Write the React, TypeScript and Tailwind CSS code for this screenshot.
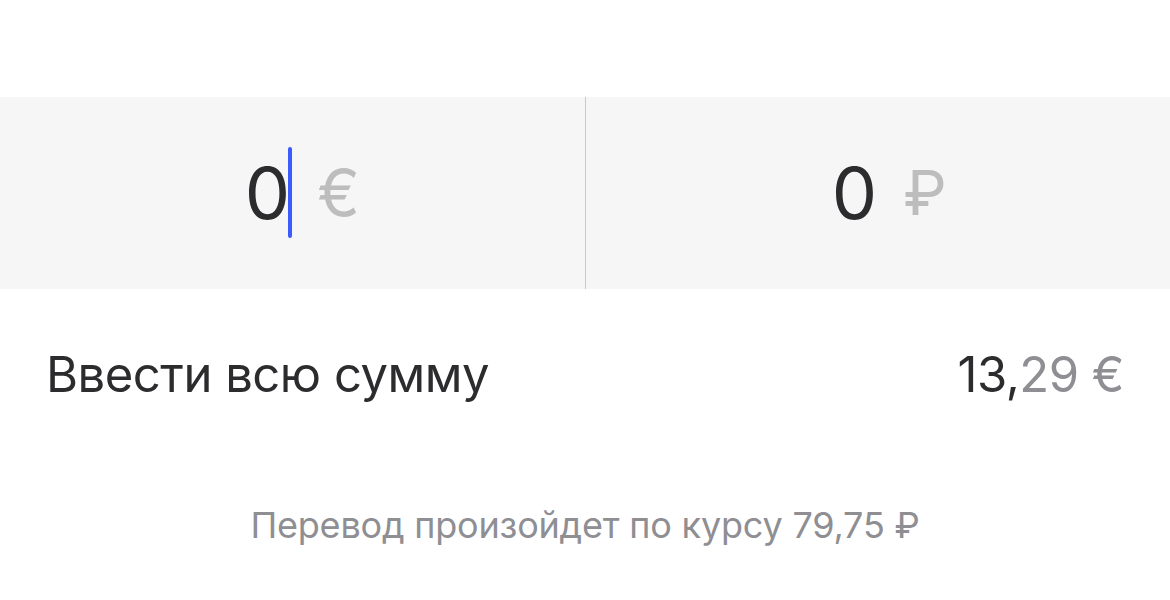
export default function App() {
  return (
    <div
      className="w-[1170px] h-[600px] bg-white overflow-hidden"
      style={{ fontFamily: "Inter, 'Noto Sans', sans-serif" }}
    >
      <div className="h-[97px]" />
      <div className="flex h-[192px] bg-[#f6f6f6]">
        <div className="flex-1 flex items-center justify-center">
          <div className="flex items-center leading-none ml-[20px]">
            <span className="relative text-[72px] text-[#2c2c2e]">
              0
              <span className="absolute left-[43px] top-[-10px] w-[4px] h-[91px] rounded-full bg-[#3b5bff]" />
            </span>
            <span className="ml-[27px] text-[64px] text-[#bdbdbd]">€</span>
          </div>
        </div>
        <div className="w-px bg-[#c9c9c9]" />
        <div className="flex-1 flex items-center justify-center">
          <div className="flex items-center leading-none ml-[23px]">
            <span className="text-[72px] text-[#2c2c2e]">0</span>
            <span className="ml-[26px] text-[62px] text-[#bdbdbd]">₽</span>
          </div>
        </div>
      </div>
      <div className="flex items-center justify-between px-[46px] h-[172px] text-[49px] tracking-[-0.5px]">
        <span className="text-[#2c2c2e]">Ввести всю сумму</span>
        <span>
          <span className="text-[#2c2c2e]">13,</span>
          <span className="text-[#8e8e93]">29 €</span>
        </span>
      </div>
      <div className="text-center text-[36px] text-[#8e8e93] mt-[37px] tracking-[-0.2px]">
        Перевод произойдет по курсу 79,75 ₽
      </div>
    </div>
  );
}
